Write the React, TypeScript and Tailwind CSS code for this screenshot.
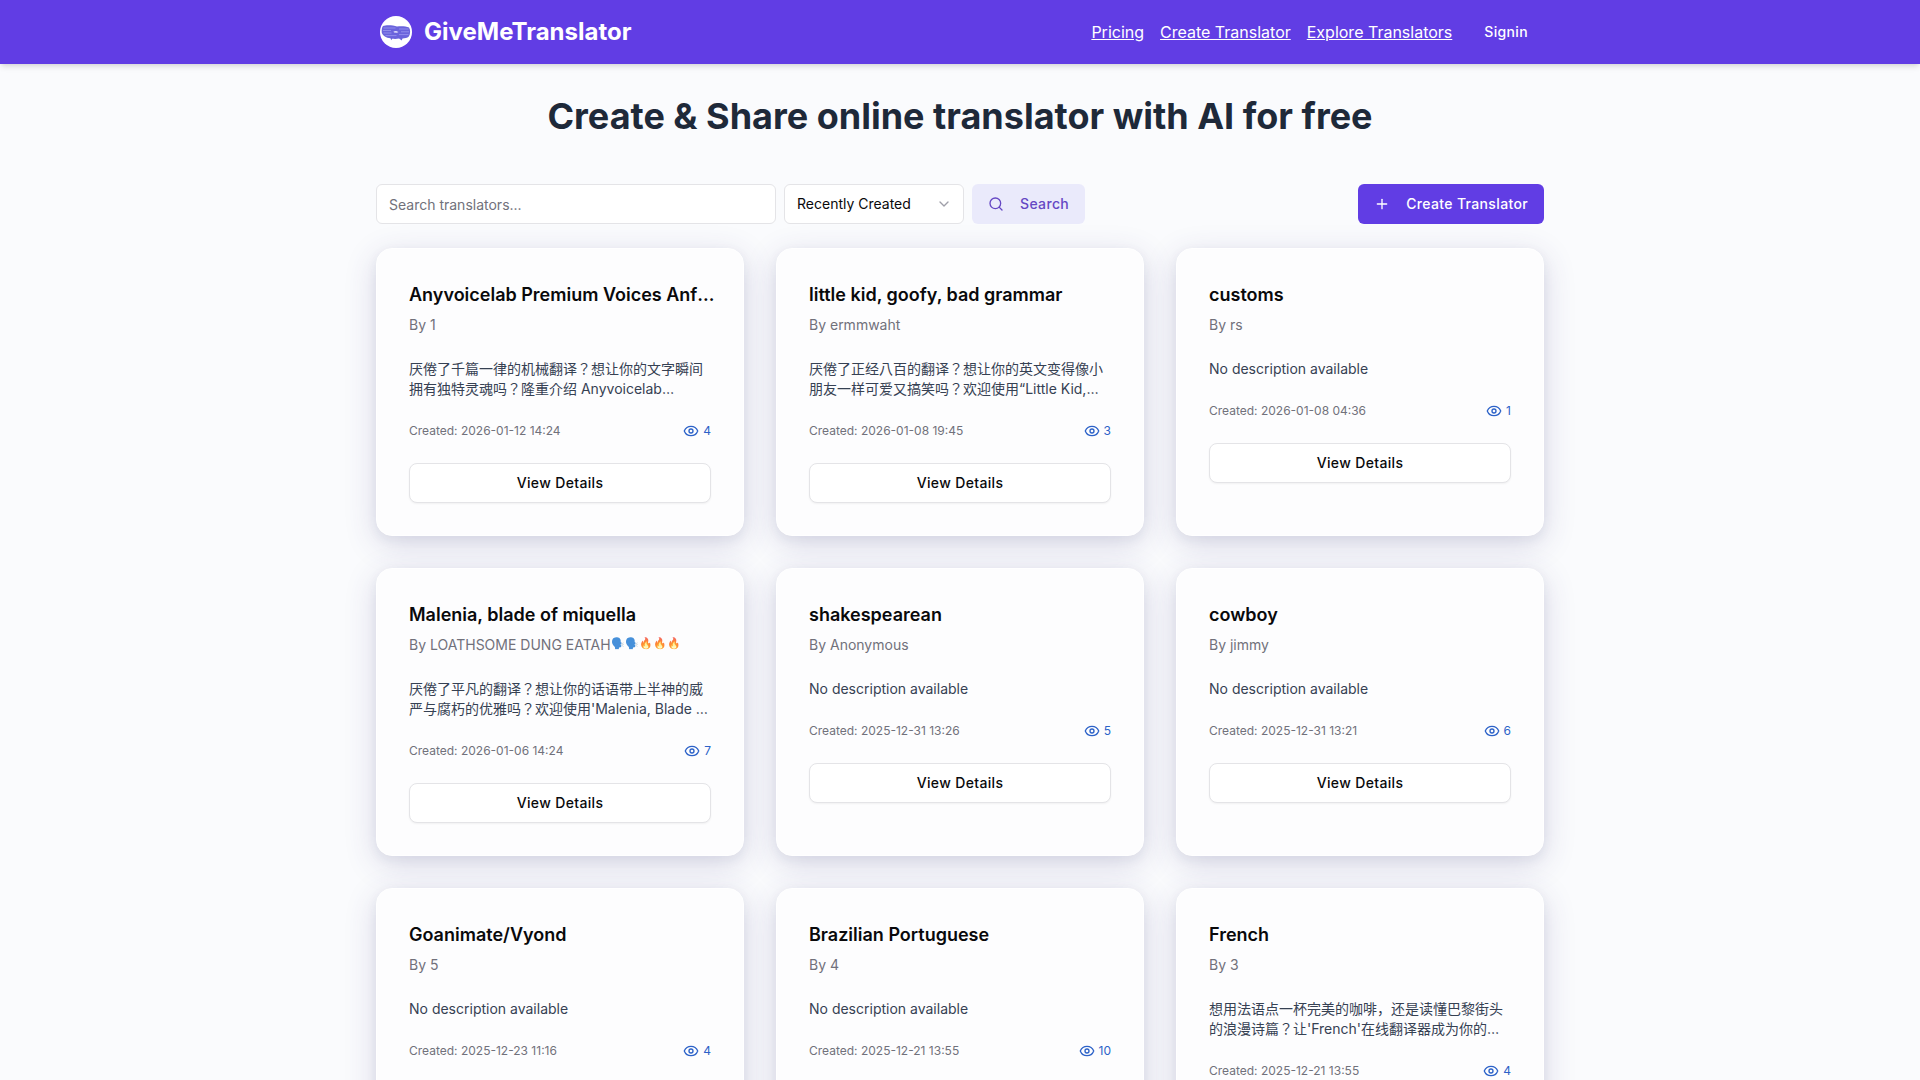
import { ChevronDown, Eye, Plus, Search } from "lucide-react";

type Translator = {
  title: string;
  author: string;
  emoji?: string;
  description?: string;
  created: string;
  views: number;
};

const translators: Translator[] = [
  { title: "Anyvoicelab Premium Voices Anfrage", author: "1", description: "厌倦了千篇一律的机械翻译？想让你的文字瞬间拥有独特灵魂吗？隆重介绍 Anyvoicelab Premium Voices", created: "2026-01-12 14:24", views: 4 },
  { title: "little kid, goofy, bad grammar", author: "ermmwaht", description: "厌倦了正经八百的翻译？想让你的英文变得像小朋友一样可爱又搞笑吗？欢迎使用“Little Kid, Goofy, Bad Grammar”", created: "2026-01-08 19:45", views: 3 },
  { title: "customs", author: "rs", created: "2026-01-08 04:36", views: 1 },
  { title: "Malenia, blade of miquella", author: "LOATHSOME DUNG EATAH", emoji: "🗣️🗣️🔥🔥🔥", description: "厌倦了平凡的翻译？想让你的话语带上半神的威严与腐朽的优雅吗？欢迎使用'Malenia, Blade of Miquella'", created: "2026-01-06 14:24", views: 7 },
  { title: "shakespearean", author: "Anonymous", created: "2025-12-31 13:26", views: 5 },
  { title: "cowboy", author: "jimmy", created: "2025-12-31 13:21", views: 6 },
  { title: "Goanimate/Vyond", author: "5", created: "2025-12-23 11:16", views: 4 },
  { title: "Brazilian Portuguese", author: "4", created: "2025-12-21 13:55", views: 10 },
  { title: "French", author: "3", description: "想用法语点一杯完美的咖啡，还是读懂巴黎街头的浪漫诗篇？让'French'在线翻译器成为你的专属法语助手", created: "2025-12-21 13:55", views: 4 },
];

function Logo() {
  return (
    <svg viewBox="0 0 32 32" className="size-8" aria-hidden="true">
      <circle cx="16" cy="16" r="16" fill="#fff" />
      <path d="M3 10C6 8.800 13 9 17 10.600c4-.5 9-.3 12 .9 1.600 2.500 1.500 6.500-.2 9-1.500 1.400-4 1.900-6.300 1.900l-.8 2.200-2.600-2c-2.500.4-5 .3-7 .2l-.8 1.400-.9-1.900C6 21.800 3 20 1.800 17 1.500 14 1.800 11.500 3 10z" fill="#6a63dc" />
      <path d="M3.500 12h12M3 14.500h8M3.500 17h8M5.500 19.600h11M19 13h9.500M21 15.800h8M19 18.600h9.500" stroke="#9b97f0" strokeWidth="0.800" fill="none" />
      <path d="M13.500 15.600l2.500-.7 2.500 1-1.500.9-3-.2z" fill="#e4e2fc" />
    </svg>
  );
}

function TranslatorCard({ item }: { item: Translator }) {
  return (
    <article className="rounded-2xl border border-white bg-[#fdfdfe] p-8 shadow-[0_8px_32px_rgba(60,50,130,0.18),0_4px_12px_rgba(30,60,90,0.06)]">
      <h2 className="-mr-2 truncate text-lg leading-7 font-semibold text-zinc-950">{item.title}</h2>
      <p className="mt-1.5 flex text-sm leading-5 text-zinc-500">
        By {item.author}
        {item.emoji && <span className="text-[11px] leading-4 opacity-80">{item.emoji}</span>}
      </p>
      <p className="mt-6 line-clamp-2 text-sm leading-5 text-gray-700">{item.description ?? "No description available"}</p>
      <div className="mt-6 flex items-center justify-between text-xs leading-4 text-zinc-500">
        <span>Created: {item.created}</span>
        <span className="flex items-center gap-1 text-[#2c62c8]">
          <Eye className="size-4" aria-hidden="true" />
          {item.views}
        </span>
      </div>
      <button className="mt-6 h-10 w-full rounded-lg border border-zinc-200 bg-white text-sm font-medium tracking-wide text-zinc-950 shadow-xs">
        View Details
      </button>
    </article>
  );
}

export default function App() {
  return (
    <div className="min-h-screen bg-[#fafbfd] font-['Inter','Noto_Sans_CJK_JP','Noto_Sans_CJK_TC',sans-serif]">
      <header className="relative bg-[#613de4] text-white shadow-md">
        <div className="mx-auto flex h-16 max-w-[1200px] items-center justify-between px-4">
          <a href="#" className="flex items-center gap-3 pl-1 text-2xl font-bold">
            <Logo />
            GiveMeTranslator
          </a>
          <nav className="flex items-center gap-4 text-base">
            <a href="#pricing" className="underline">Pricing</a>
            <a href="#create" className="underline">Create Translator</a>
            <a href="#explore" className="underline">Explore Translators</a>
            <button className="px-4 text-sm font-medium tracking-wide">Signin</button>
          </nav>
        </div>
      </header>
      <main className="mx-auto max-w-[1200px] px-4 pt-8 pb-16">
        <h1 className="text-center text-4xl leading-10 font-bold text-gray-800">Create &amp; Share online translator with AI for free</h1>
        <div className="mt-12 flex items-center justify-between">
          <form className="flex items-center gap-2" onSubmit={(e) => e.preventDefault()}>
            <input
              type="text"
              aria-label="Search translators"
              placeholder="Search translators..."
              className="h-10 w-100 rounded-md border border-zinc-200 bg-white px-3 text-sm placeholder:text-zinc-500"
            />
            <div className="grid items-center">
              <select aria-label="Sort order" className="col-start-1 row-start-1 h-10 w-45 appearance-none rounded-md border border-zinc-200 bg-white px-3 text-sm text-zinc-950">
                <option>Recently Created</option>
                <option>Most Viewed</option>
              </select>
              <ChevronDown className="pointer-events-none col-start-1 row-start-1 mr-3 size-4 justify-self-end text-zinc-400" aria-hidden="true" />
            </div>
            <button className="flex h-10 items-center gap-4 rounded-md bg-[#eaeafb] px-4 text-sm font-medium tracking-wide text-[#6547c4]">
              <Search className="size-4" aria-hidden="true" />
              Search
            </button>
          </form>
          <a href="#create" className="flex h-10 items-center gap-4 rounded-md bg-[#613de4] px-4 text-sm font-medium tracking-wide text-white">
            <Plus className="size-4" aria-hidden="true" />
            Create Translator
          </a>
        </div>
        <div className="mt-6 grid grid-cols-3 gap-8">
          {translators.map((item) => (
            <TranslatorCard key={item.title} item={item} />
          ))}
        </div>
      </main>
    </div>
  );
}
